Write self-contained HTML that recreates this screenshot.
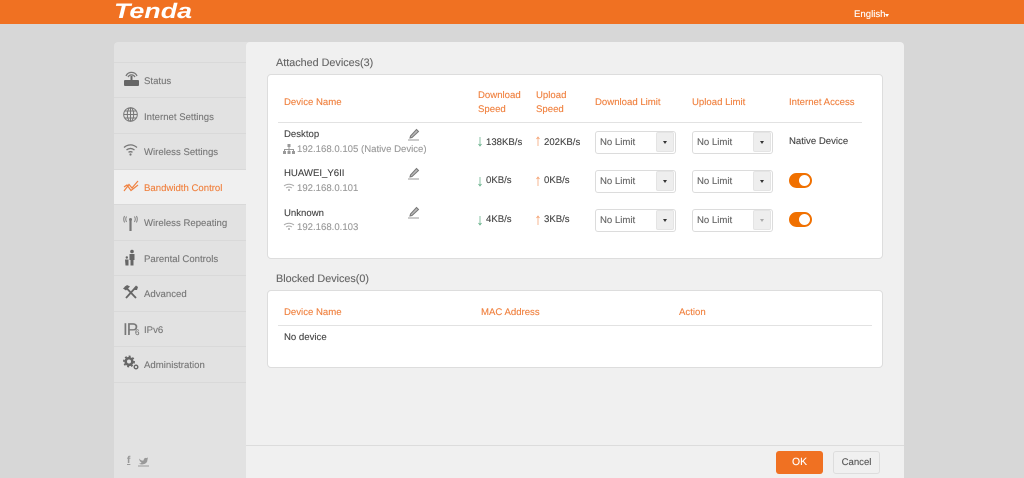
<!DOCTYPE html>
<html><head><meta charset="utf-8"><style>
html,body{margin:0;padding:0;width:1024px;height:478px;overflow:hidden;background:#d7d7d7;font-family:"Liberation Sans",sans-serif;font-size:9.6px;color:#444;text-rendering:geometricPrecision}
#w{position:absolute;left:0;top:0;width:1024px;height:478px;filter:blur(.3px);background:#d7d7d7}
div,span,svg{position:absolute}
.t{white-space:nowrap;line-height:12px;margin-top:1px;-webkit-text-stroke:.12px currentColor}
.o{color:#f0813f}
.g{color:#999}
.n{left:144px;color:#777;white-space:nowrap;line-height:12px;margin-top:1px;-webkit-text-stroke:.12px currentColor}
.h{margin-top:0}
.d{left:114px;width:132px;height:1px;background:#d9d9d9}
.sel{width:79px;height:21px;border:1px solid #dcdcdc;border-radius:3px;background:#fff;box-sizing:content-box}
.sel b{position:absolute;left:4px;top:5px;font-weight:normal;color:#666;line-height:12px;-webkit-text-stroke:.12px currentColor}
.sel i{position:absolute;right:1px;top:0;width:18px;height:20px;background:#eee;border:1px solid #e4e4e4;box-sizing:border-box;border-radius:2px}
.sel i:after{content:"";position:absolute;left:6px;top:8px;border:2.500px solid transparent;border-top:3px solid #333;border-bottom:0}
.sel.dis i:after{border-top-color:#aaa}
.tog{left:789px;width:23px;height:15px;border-radius:8px;background:#f07000}
.tog:after{content:"";position:absolute;left:10px;top:2px;width:11px;height:11px;border-radius:50%;background:#fff}
.panel{left:267px;width:614px;background:#fff;border:1px solid #ddd;border-radius:4px}
.ic{stroke:#777;fill:none}
</style></head><body><div id="w">
<div style="left:0;top:0;width:1024px;height:24px;background:#f07122"></div>
<svg style="left:110px;top:0" width="90" height="24"><text x="4" y="18" font-family="Liberation Sans" font-weight="bold" font-style="italic" font-size="21" fill="#fff" textLength="78" lengthAdjust="spacingAndGlyphs">Tenda</text></svg>
<div class="t" style="left:854px;top:8px;color:#fff">English</div>
<div style="left:885px;top:14px;border:2.500px solid transparent;border-top:3px solid #fff;border-bottom:0"></div>

<div style="left:114px;top:42px;width:140px;height:436px;background:#e2e2e2;border-radius:4px 4px 0 0"></div>
<div style="left:246px;top:42px;width:658px;height:436px;background:#f0f0f0;border-radius:4px 4px 0 0"></div>
<div style="left:114px;top:170px;width:132px;height:34px;background:#f0f0f0"></div>
<div style="left:246px;top:445px;width:658px;height:1px;background:#dcdcdc"></div>

<div class="d" style="top:62px"></div><div class="d" style="top:97px"></div><div class="d" style="top:133px"></div><div class="d" style="top:169px"></div><div class="d" style="top:204px"></div><div class="d" style="top:240px"></div><div class="d" style="top:275px"></div><div class="d" style="top:311px"></div><div class="d" style="top:346px"></div><div class="d" style="top:382px"></div>

<div class="n" style="top:75px">Status</div>
<div class="n" style="top:111px">Internet Settings</div>
<div class="n" style="top:146px">Wireless Settings</div>
<div class="n" style="top:182px;color:#f0813f">Bandwidth Control</div>
<div class="n" style="top:217px">Wireless Repeating</div>
<div class="n" style="top:253px">Parental Controls</div>
<div class="n" style="top:288px">Advanced</div>
<div class="n" style="top:324px">IPv6</div>
<div class="n" style="top:359px">Administration</div>

<svg style="left:122px;top:70px" width="18" height="18"><rect x="2" y="10" width="15" height="6" rx="1" fill="#666"/><path d="M9.500 10V6" stroke="#666" stroke-width="2"/><path class="ic" d="M4 6A6 6 0 0 1 15 6M6 7A4 4 0 0 1 13 7" stroke-width="1.300"/></svg>
<svg style="left:122px;top:106px" width="18" height="18"><g class="ic" stroke-width="1"><circle cx="8.500" cy="8.500" r="6.800"/><ellipse cx="8.500" cy="8.500" rx="3.200" ry="6.800"/><path d="M8.500 1.700V15.300M1.700 8.500H15.300M2.700 5H14.300M2.700 12H14.300"/></g></svg>
<svg style="left:122px;top:143px" width="18" height="14"><g class="ic" stroke-width="1.300"><path d="M2 4.500C6 1 11 1 15 4.500M4.500 7C7 5 10 5 12.500 7M6.500 9.300C8 8.400 9 8.400 10.500 9.300"/></g><circle cx="8.500" cy="11.500" r="1.100" fill="#777"/></svg>
<svg style="left:122px;top:178px" width="18" height="16"><path d="M2 13L7 6.500L10 10L16 3M2 9L5 7L9 12.500L16 7" fill="none" stroke="#f0813f" stroke-width="1.200"/></svg>
<svg style="left:122px;top:214px" width="18" height="18"><path d="M8.500 6V17" stroke="#777" stroke-width="2.200"/><circle cx="8.500" cy="5.500" r="1.500" fill="#777"/><path class="ic" d="M4.500 2.500Q3 5 4.500 8M2.500 2Q1 5 2.500 8.500M12.500 2.500Q14 5 12.500 8M14.500 2Q16 5 14.500 8.500" stroke-width=".9"/></svg>
<svg style="left:122px;top:249px" width="18" height="18"><circle cx="10" cy="2.500" r="1.800" fill="#666"/><path d="M7.500 5H12.500V11H11.500V16.500H8.500V11H7.500Z" fill="#666"/><circle cx="4.800" cy="8.500" r="1.200" fill="#666"/><path d="M3 10.500H6.500V16.500H3.500Z" fill="#666"/></svg>
<svg style="left:122px;top:284px" width="18" height="16"><path d="M3 2.500L14 14M14 3L4 14" stroke="#666" stroke-width="1.800" fill="none"/><path d="M1 4.500L5 1L8 2.500L4 6.500Z" fill="#666"/><path d="M11.500 4.500L14 1.500L16 3L15 6L12.500 6Z" fill="#666"/></svg>
<div class="t h" style="left:123px;top:321px;color:#777;font-size:17px;line-height:18px;letter-spacing:-1px">IP</div>
<div class="t h" style="left:135px;top:328px;color:#777;font-size:8px;line-height:9px">6</div>
<svg style="left:122px;top:355px" width="18" height="16"><circle cx="7" cy="6.500" r="3.300" fill="none" stroke="#666" stroke-width="2.600"/><circle cx="7" cy="6.500" r="5.200" fill="none" stroke="#666" stroke-width="1.500" stroke-dasharray="2 2"/><circle cx="14" cy="12" r="1.800" fill="none" stroke="#666" stroke-width="1.400"/></svg>
<div class="t h" style="left:127px;top:455px;color:#999;font-weight:bold;font-size:10px;text-decoration:underline">f</div>
<svg style="left:138px;top:456px" width="11" height="11"><path d="M1 2.500Q3 5 5.500 4.500Q6 1.500 8.500 2L10 1.500L9.500 3.500Q9.500 8 4 8.500Q2 8.500 1 7.500Q3 7.500 3.500 6.500Q1.500 5.500 1 2.500Z" fill="#999"/><path d="M0 10H11" stroke="#999"/></svg>

<div class="t h" style="left:276px;top:57px;color:#666;font-size:10.800px">Attached Devices(3)</div>
<div class="panel" style="top:74px;height:183px"></div>
<div class="t o" style="left:284px;top:96px">Device Name</div>
<div class="t o h" style="left:478px;top:89px;line-height:14px">Download<br>Speed</div>
<div class="t o h" style="left:536px;top:89px;line-height:14px">Upload<br>Speed</div>
<div class="t o" style="left:595px;top:96px">Download Limit</div>
<div class="t o" style="left:692px;top:96px">Upload Limit</div>
<div class="t o" style="left:789px;top:96px">Internet Access</div>
<div style="left:278px;top:122px;width:584px;height:1px;background:#e2e2e2"></div>

<div class="t" style="left:284px;top:128px">Desktop</div>
<div class="t g" style="left:297px;top:143px">192.168.0.105 (Native Device)</div>
<div class="t" style="left:284px;top:167px">HUAWEI_Y6II</div>
<div class="t g" style="left:297px;top:182px">192.168.0.101</div>
<div class="t" style="left:284px;top:207px">Unknown</div>
<div class="t g" style="left:297px;top:221px">192.168.0.103</div>

<svg style="left:283px;top:143px" width="12" height="12"><path d="M6 1.500V5M1.500 10V6.500H10.500V10M6 5V10" fill="none" stroke="#999"/><rect x="4.500" y="1" width="3" height="3" fill="#999"/><rect x="0" y="8" width="3" height="3" fill="#999"/><rect x="4.500" y="8" width="3" height="3" fill="#999"/><rect x="9" y="8" width="3" height="3" fill="#999"/></svg>
<svg style="left:283px;top:183px" width="12" height="10"><path d="M1 3C4 .7 8 .7 11 3M3 5C5 3.700 7 3.700 9 5" fill="none" stroke="#aaa"/><circle cx="6" cy="7" r="1" fill="#aaa"/></svg>
<svg style="left:283px;top:222px" width="12" height="10"><path d="M1 3C4 .7 8 .7 11 3M3 5C5 3.700 7 3.700 9 5" fill="none" stroke="#aaa"/><circle cx="6" cy="7" r="1" fill="#aaa"/></svg>

<svg style="left:407px;top:128px" width="14" height="13"><path d="M3.500 8L9.500 1.500L11.500 3.500L5 9.500L3 10Z" fill="#bbb" stroke="#777" stroke-width="1"/><path d="M1 12H12" stroke="#999"/></svg>
<svg style="left:407px;top:167px" width="14" height="13"><path d="M3.500 8L9.500 1.500L11.500 3.500L5 9.500L3 10Z" fill="#bbb" stroke="#777" stroke-width="1"/><path d="M1 12H12" stroke="#999"/></svg>
<svg style="left:407px;top:206px" width="14" height="13"><path d="M3.500 8L9.500 1.500L11.500 3.500L5 9.500L3 10Z" fill="#bbb" stroke="#777" stroke-width="1"/><path d="M1 12H12" stroke="#999"/></svg>

<svg style="left:477px;top:136px" width="6" height="11"><path d="M3 1V9M1.500 8L3 10L4.500 8" fill="none" stroke="#5aaa80" stroke-width=".7"/></svg>
<svg style="left:477px;top:176px" width="6" height="11"><path d="M3 1V9M1.500 8L3 10L4.500 8" fill="none" stroke="#5aaa80" stroke-width=".7"/></svg>
<svg style="left:477px;top:215px" width="6" height="11"><path d="M3 1V9M1.500 8L3 10L4.500 8" fill="none" stroke="#5aaa80" stroke-width=".7"/></svg>
<svg style="left:535px;top:136px" width="6" height="11"><path d="M3 10V2M1.500 3L3 1L4.500 3" fill="none" stroke="#f49a66" stroke-width=".7"/></svg>
<svg style="left:535px;top:176px" width="6" height="11"><path d="M3 10V2M1.500 3L3 1L4.500 3" fill="none" stroke="#f49a66" stroke-width=".7"/></svg>
<svg style="left:535px;top:215px" width="6" height="11"><path d="M3 10V2M1.500 3L3 1L4.500 3" fill="none" stroke="#f49a66" stroke-width=".7"/></svg>

<div class="t" style="left:486px;top:136px">138KB/s</div>
<div class="t" style="left:544px;top:136px">202KB/s</div>
<div class="t" style="left:486px;top:174px">0KB/s</div>
<div class="t" style="left:544px;top:174px">0KB/s</div>
<div class="t" style="left:486px;top:213px">4KB/s</div>
<div class="t" style="left:544px;top:213px">3KB/s</div>

<div class="sel" style="left:595px;top:131px"><b>No Limit</b><i></i></div>
<div class="sel" style="left:692px;top:131px"><b>No Limit</b><i></i></div>
<div class="sel" style="left:595px;top:170px"><b>No Limit</b><i></i></div>
<div class="sel" style="left:692px;top:170px"><b>No Limit</b><i></i></div>
<div class="sel" style="left:595px;top:209px"><b>No Limit</b><i></i></div>
<div class="sel dis" style="left:692px;top:209px"><b>No Limit</b><i></i></div>

<div class="t" style="left:789px;top:135px">Native Device</div>
<div class="tog" style="top:173px"></div>
<div class="tog" style="top:212px"></div>

<div class="t h" style="left:276px;top:273px;color:#666;font-size:10.800px">Blocked Devices(0)</div>
<div class="panel" style="top:290px;height:76px"></div>
<div class="t o" style="left:284px;top:306px">Device Name</div>
<div class="t o" style="left:481px;top:306px">MAC Address</div>
<div class="t o" style="left:679px;top:306px">Action</div>
<div style="left:278px;top:325px;width:594px;height:1px;background:#e2e2e2"></div>
<div class="t" style="left:284px;top:331px">No device</div>

<div class="t h" style="left:776px;top:451px;width:47px;height:23px;background:#f07122;border-radius:3px;color:#fff;text-align:center;line-height:23px;font-size:10.400px">OK</div>
<div class="t h" style="left:833px;top:451px;width:45px;height:21px;background:#f0f0f0;border:1px solid #ddd;border-radius:3px;color:#555;text-align:center;line-height:21px">Cancel</div>
</div></body></html>
